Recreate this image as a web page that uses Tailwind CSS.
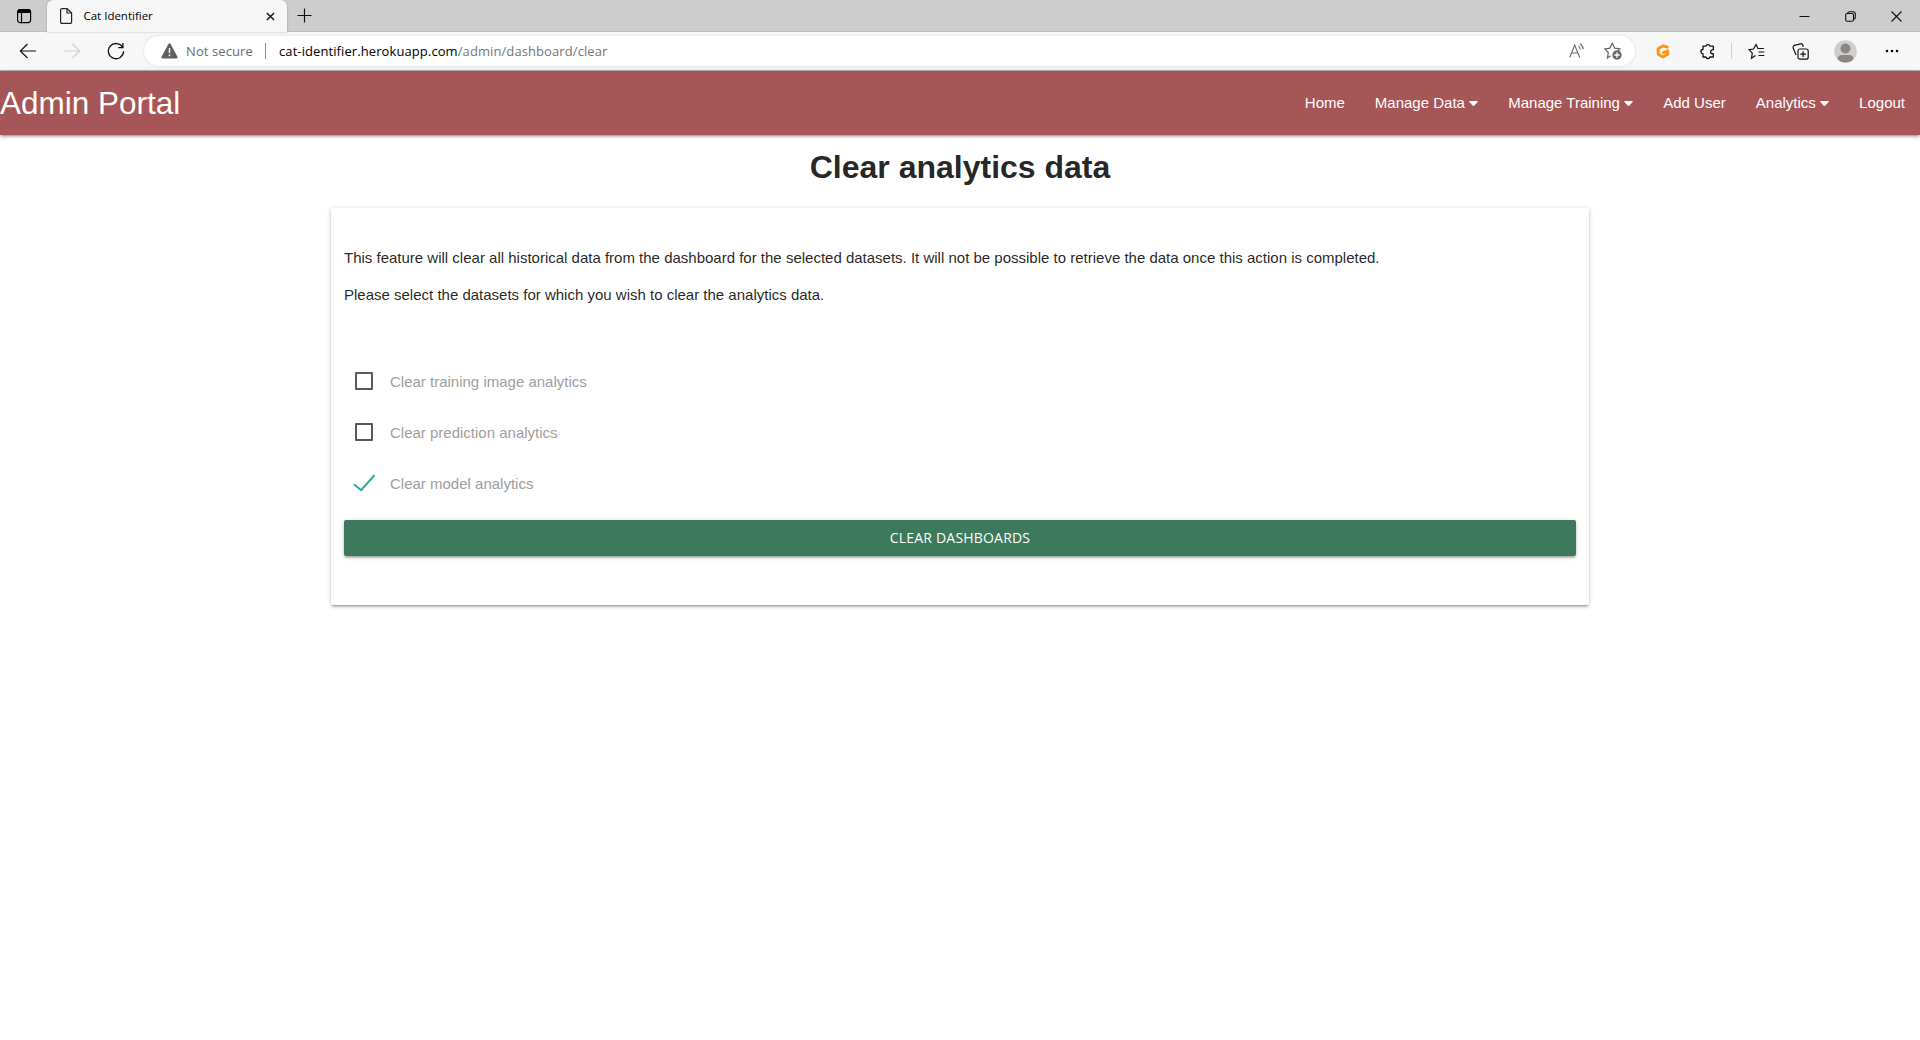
<!DOCTYPE html>
<html lang="en">
<head>
<meta charset="utf-8">
<title>Cat Identifier</title>
<script src="https://cdn.jsdelivr.net/npm/@tailwindcss/browser@4"></script>
</head>
<body class="h-[1040px] overflow-hidden bg-white font-['Liberation_Sans',sans-serif] text-[15px] text-black/87">
<header class="font-['Open_Sans',sans-serif]">
  <div class="flex h-8 items-start border-b border-[#bdbdbd] bg-[#cdcdcd] text-black">
    <div class="flex h-[31px] w-[47px] items-center justify-center pt-px">
      <svg class="size-4" viewBox="0 0 16 16" fill="none" stroke="currentColor"><rect x="1.6" y="1.6" width="13" height="13" rx="2.5" stroke-width="1.2"/><path d="M1.6 4.2V4A2.4 2.4 0 0 1 4 1.6h8.2A2.4 2.4 0 0 1 14.600 4v.4H1.600z" fill="currentColor"/><path d="M5.500 5v9.500" stroke-width="1.200"/></svg>
    </div>
    <div class="flex h-8 w-[240px] items-center rounded-t-md bg-[#f7f7f7] pl-[12px] shadow-[0_0_2px_rgba(0,0,0,0.3)]">
      <svg class="h-[18px] w-[14px]" viewBox="0 0 14 18" fill="none" stroke="#222" stroke-width="1.200"><path d="M1.600 3a1.400 1.400 0 0 1 1.400-1.400H8L12.600 6v9a1.400 1.400 0 0 1-1.400 1.400H3A1.400 1.400 0 0 1 1.600 15z"/><path d="M8 1.600V6h4.600"/></svg>
      <span class="ml-[10.5px] whitespace-nowrap text-[11.5px] leading-4 tracking-[-0.01px]">Cat Identifier</span>
      <svg class="mr-[12px] ml-auto size-[9px]" viewBox="0 0 10 10" stroke="#111" stroke-width="1.600"><path d="M1 1l8 8M9 1L1 9"/></svg>
    </div>
    <svg class="mt-[8px] ml-[10px] size-[15px]" viewBox="0 0 15 15" stroke="#111" stroke-width="1.200"><path d="M7.500 .5v14M.5 7.500h14"/></svg>
    <div class="ml-auto flex h-8 items-center gap-[35px] pr-[18px]">
      <svg class="h-[11px] w-[11px]" viewBox="0 0 11 11" stroke="#111"><path d="M.5 5.500h10"/></svg>
      <svg class="size-[11px]" viewBox="0 0 11 11" fill="none" stroke="#111" stroke-width="1.100"><rect x=".7" y="2.500" width="7.800" height="7.800" rx="1.600"/><path d="M2.700 2.200Q3 .7 4.500.7H8q2.300 0 2.300 2.300v3.500q0 1.500-1.500 1.800"/></svg>
      <svg class="size-[11px]" viewBox="0 0 11 11" stroke="#111" stroke-width="1.100"><path d="M.5.5l10 10M10.500.5l-10 10"/></svg>
    </div>
  </div>
  <div class="flex h-[39px] items-center border-b border-[#b5b5b5] bg-[#f7f7f7] text-black">
    <svg class="ml-[19px] h-4 w-[18px]" viewBox="0 0 18 16" fill="none" stroke="#111" stroke-width="1.200"><path d="M17 8H1.500M8.500 1L1.300 8l7.200 7"/></svg>
    <svg class="ml-[26px] h-4 w-[18px]" viewBox="0 0 18 16" fill="none" stroke="#cfcfcf" stroke-width="1.200"><path d="M1 8h15.500M9.500 1l7.200 7-7.200 7"/></svg>
    <svg class="ml-[26px] size-[18px]" viewBox="0 0 18 18" fill="none" stroke="#111" stroke-width="1.300"><path d="M15.700 5.500A7.600 7.600 0 1 0 16.600 9.300"/><path d="M15.900 1v4.700h-4.700"/></svg>
    <div class="ml-[19px] flex h-[30px] w-[1491px] items-center rounded-full bg-white pl-[17px] text-[13px] leading-5 shadow-[0_0_3px_rgba(0,0,0,0.12)]">
      <svg class="h-4 w-[17px] shrink-0" viewBox="0 0 17 16"><path d="M7.300 1.200q1.200-1.900 2.400 0l6.600 12.400q.8 1.900-1.200 1.900H1.900q-2 0-1.200-1.900z" fill="#5f5f5f"/><path d="M8.500 5v5M8.500 11.500v1.700" stroke="#fff" stroke-width="1.500"/></svg>
      <span class="ml-[8px] w-[79px] whitespace-nowrap tracking-[0.1px] text-[#6b6b6b]">Not secure</span>
      <span class="h-4 w-px bg-[#8a8a8a]"></span>
      <span class="ml-[13px] whitespace-nowrap tracking-[0.09px] text-[#757575]"><span class="text-black">cat-identifier.herokuapp.com</span>/admin/dashboard/clear</span>
      <svg class="mr-[19px] ml-auto h-4 w-4" viewBox="0 0 16 16" fill="none" stroke="#6b6b6b" stroke-width="1.100"><path d="M.7 14.500L5.700 2l5 12.500M2.500 10h6.400M9.500 3q1.600 1.200 1.700 3.400M11 .8q3 2 3.200 5.400"/></svg>
      <svg class="mr-[13px] h-[18px] w-[18px]" viewBox="0 0 18 18"><path d="M6.500 13.800L3.500 16l.8-5.500L.8 6.900l5-.8L8.300 1.300l2.400 4.800 5.200.8-2 2.200" fill="none" stroke="#5f5f5f" stroke-width="1.200"/><circle cx="13" cy="13" r="4.700" fill="#666"/><path d="M13 10.300v5.400M10.300 13h5.400" stroke="#fff" stroke-width="1.300"/></svg>
    </div>
    <svg class="ml-[21px] h-[15px] w-[14px]" viewBox="0 0 14 15" fill="none" stroke-width="2.900" stroke-linejoin="round" stroke-linecap="round"><path d="M11.200 3.200L7.500 1.800 2.200 4.600v5.600L7 13l4.800-2.700V6.900L7.500 8.700" stroke="#ff9417"/></svg>
    <svg class="ml-[30px] h-[17px] w-[16px]" viewBox="0 0 16 17" fill="none" stroke="#111" stroke-width="1.300" stroke-linejoin="round"><path d="M3 3.200h2.800a2.100 2.100 0 0 1 4.100 0H13.300v3.600h-.8a1.900 1.900 0 0 0 0 3.800h.8V14H9.900a2.100 2.100 0 0 1-4.100 0H3v-3.300a2.100 2.100 0 0 1 0-4.200z"/></svg>
    <span class="ml-[15px] h-4 w-px bg-[#d0d0d0]"></span>
    <svg class="ml-[16px] h-[17px] w-[17px]" viewBox="0 0 17 17" fill="none" stroke="#111" stroke-width="1.200"><path d="M7.500 12.500L3.500 15.200l.8-5L1 6.700l4.500-.7L8 1.500l1.900 4h6M10.500 9h5.800M10.500 12.500h5.800"/></svg>
    <svg class="ml-[27px] h-[17px] w-[17px]" viewBox="0 0 17 17" fill="none" stroke="#111" stroke-width="1.200"><rect x="6" y="6" width="10.200" height="10.200" rx="2"/><path d="M11.100 8.200v5.800M8.200 11.100h5.800M4 12L1.200 5Q.7 3 2.500 2.300L8.500.8q1.700-.4 2.300 1.400l.5 1.600"/></svg>
    <svg class="ml-[25px] size-[23px]" viewBox="0 0 23 23"><circle cx="11.500" cy="11.500" r="11.300" fill="#d0cecb"/><circle cx="11.500" cy="8.500" r="5" fill="#8c8784"/><path d="M3.700 19.500Q3.500 15 8 15h7q4.500 0 4.300 4.500a11.300 11.300 0 0 1-15.600 0z" fill="#8c8784"/></svg>
    <svg class="ml-[28px] h-1 w-[14px]" viewBox="0 0 14 4"><circle cx="2" cy="2" r="1.300"/><circle cx="7" cy="2" r="1.300"/><circle cx="12" cy="2" r="1.300"/></svg>
  </div>
</header>
<nav class="relative flex h-16 items-center justify-between bg-[#a65656] text-white shadow-[0_2px_2px_0_rgba(0,0,0,0.14),0_3px_1px_-2px_rgba(0,0,0,0.12),0_1px_5px_0_rgba(0,0,0,0.2)]">
  <a class="text-[31.5px] leading-[64px]">Admin Portal</a>
  <ul class="flex text-[15px] leading-[64px]">
    <li class="px-[15px]"><a>Home</a></li>
    <li class="flex items-center px-[15px]"><a>Manage Data</a><svg class="mt-px ml-[4.3px] h-[5px] w-[9px]" viewBox="0 0 9 5" fill="white"><path d="M.8 0h7.400q1 .2.400 1L5.200 4.700q-.7.500-1.400 0L.4 1Q-.2.200.8 0z"/></svg></li>
    <li class="flex items-center px-[15px]"><a>Manage Training</a><svg class="mt-px ml-[4.3px] h-[5px] w-[9px]" viewBox="0 0 9 5" fill="white"><path d="M.8 0h7.400q1 .2.400 1L5.200 4.700q-.7.500-1.400 0L.4 1Q-.2.200.8 0z"/></svg></li>
    <li class="px-[15px]"><a>Add User</a></li>
    <li class="flex items-center px-[15px]"><a>Analytics</a><svg class="mt-px ml-[4.3px] h-[5px] w-[9px]" viewBox="0 0 9 5" fill="white"><path d="M.8 0h7.400q1 .2.400 1L5.200 4.700q-.7.500-1.400 0L.4 1Q-.2.200.8 0z"/></svg></li>
    <li class="px-[15px]"><a>Logout</a></li>
  </ul>
</nav>
<main class="mx-auto w-[1258px]">
  <h1 class="pt-[15px] text-center text-[32px] leading-[35px] font-bold">Clear analytics data</h1>
  <section class="mt-[23px] h-[397px] rounded-xs bg-white px-[13px] pt-[39px] shadow-[0_2px_2px_0_rgba(0,0,0,0.14),0_3px_1px_-2px_rgba(0,0,0,0.12),0_1px_5px_0_rgba(0,0,0,0.2)]">
    <p class="leading-[22px]">This feature will clear all historical data from the dashboard for the selected datasets. It will not be possible to retrieve the data once this action is completed.</p>
    <p class="mt-[15px] leading-[22px]">Please select the datasets for which you wish to clear the analytics data.</p>
    <form class="mt-[49px]">
      <label class="flex h-[51px] items-center pt-px pl-[11px] text-[#9e9e9e]"><span class="size-[18px] rounded-[1px] border-2 border-[#5a5a5a]"></span><span class="mt-[3px] ml-[17px]">Clear training image analytics</span></label>
      <label class="flex h-[51px] items-center pt-px pl-[11px] text-[#9e9e9e]"><span class="size-[18px] rounded-[1px] border-2 border-[#5a5a5a]"></span><span class="mt-[3px] ml-[17px]">Clear prediction analytics</span></label>
      <label class="flex h-[51px] items-center pt-px pl-[9px] text-[#9e9e9e]"><svg class="h-[18px] w-[23px]" viewBox="0 0 23 18" fill="none" stroke="#26a69a" stroke-width="2"><path d="M1 10.500L8.200 16.200 21.500 1.200"/></svg><span class="mt-[3px] ml-[14px]">Clear model analytics</span></label>
      <button type="button" class="mt-[12px] flex h-9 w-full items-center justify-center rounded-xs bg-[#3d795c] pb-[2px] font-['Open_Sans',sans-serif] text-[14px] tracking-[0.2px] text-white shadow-[0_2px_2px_0_rgba(0,0,0,0.14),0_3px_1px_-2px_rgba(0,0,0,0.12),0_1px_5px_0_rgba(0,0,0,0.2)]">CLEAR DASHBOARDS</button>
    </form>
  </section>
</main>
</body>
</html>
